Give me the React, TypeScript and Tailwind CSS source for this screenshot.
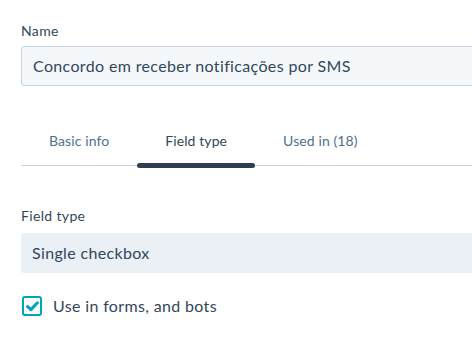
import { useState } from "react";

const tabs = ["Basic info", "Field type", "Used in (18)"];

export default function App() {
  const [active, setActive] = useState(1);
  const [checked, setChecked] = useState(true);

  return (
    <div
      className="w-[472px] h-[356px] overflow-hidden bg-white text-[#33475b] tracking-[0.35px]"
      style={{ fontFamily: "Lato, 'Open Sans', sans-serif" }}
    >
      <div className="w-[520px] pl-[21px] pt-[20px]">
        <label className="block text-[14px] leading-[22px] mb-[4px]">Name</label>
        <div className="h-[40px] flex items-center px-[11px] bg-[#f5f8fa] border border-[#cbd6e2] rounded-[3px] text-[16px]">
          Concordo em receber notificações por SMS
        </div>

        <div className="mt-[30px] flex h-[50px] border-b border-[#cbd6e2]">
          {tabs.map((t, i) => (
            <button
              key={t}
              onClick={() => setActive(i)}
              className={`relative flex items-center px-[28px] text-[14px] tracking-[0.1px] ${
                i === active ? "text-[#33475b]" : "text-[#516f90]"
              }`}
            >
              {t}
              {i === active && (
                <span className="absolute left-0 right-0 bottom-[-3px] h-[5px] rounded-full bg-[#2d3e50]" />
              )}
            </button>
          ))}
        </div>

        <label className="block mt-[39px] text-[14px] leading-[22px] mb-[6px]">Field type</label>
        <div className="h-[40px] flex items-center px-[11px] bg-[#eaf0f6] rounded-[3px] text-[16px]">
          Single checkbox
        </div>

        <label className="mt-[21px] flex items-center gap-[11px] cursor-pointer">
          <span
            onClick={() => setChecked(!checked)}
            className="w-[20px] h-[20px] ml-[1px] border-2 border-[#00a4bd] rounded-[3px] flex items-center justify-center"
          >
            {checked && (
              <svg width="13" height="11" viewBox="0 0 13 11">
                <path d="M1.6 5.6 L4.9 8.6 L11.4 1.8" fill="none" stroke="#00a4bd" strokeWidth="3" strokeLinecap="round" strokeLinejoin="round" />
              </svg>
            )}
          </span>
          <span className="text-[16px]">Use in forms, and bots</span>
        </label>
      </div>
    </div>
  );
}
